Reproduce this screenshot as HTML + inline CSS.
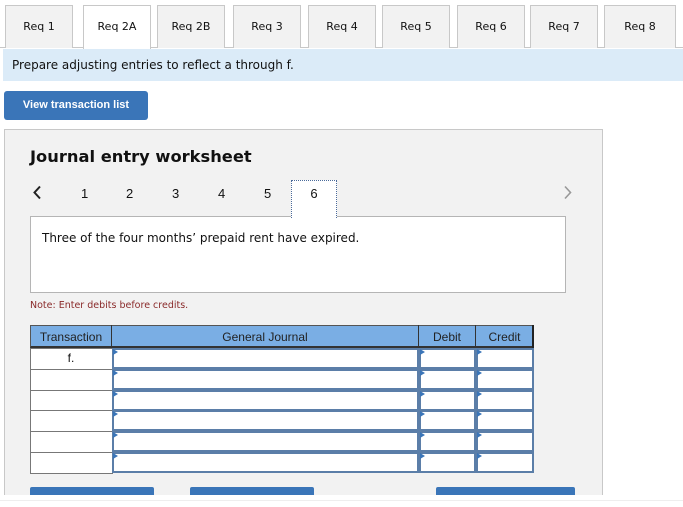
<!DOCTYPE html>
<html><head><style>
body{margin:0;width:683px;height:507px;background:#fff;font-family:"DejaVu Sans","Liberation Sans",sans-serif;position:relative;overflow:hidden;color:#111}
.a{position:absolute}
.tab{position:absolute;top:5px;height:42px;width:66px;background:#f2f2f2;border:1px solid #c8c8c8;border-bottom:none;font-size:11px;text-align:center;line-height:42px}
.tab.on{background:#fff;height:43px}
.num{position:absolute;top:186px;font-size:13px;font-family:"Liberation Sans",sans-serif}
.c{position:absolute;background:#fff;border:1px solid #777}
.in{position:absolute;background:#fff;border:2px solid #5b7ea8;box-sizing:border-box}
.tri{position:absolute;width:0;height:0;border-left:5px solid #3a75b8;border-top:3px solid transparent;border-bottom:3px solid transparent}
.btn{position:absolute;top:487px;height:8px;background:#3a75b8;border-radius:2px 2px 0 0}
</style></head><body>
<div class="a" style="left:0;top:47px;width:683px;height:1px;background:#c8c8c8"></div>
<div class="tab" style="left:5px">Req 1</div>
<div class="tab on" style="left:83px">Req 2A</div>
<div class="tab" style="left:157px">Req 2B</div>
<div class="tab" style="left:233px">Req 3</div>
<div class="tab" style="left:308px">Req 4</div>
<div class="tab" style="left:382px">Req 5</div>
<div class="tab" style="left:457px">Req 6</div>
<div class="tab" style="left:530px">Req 7</div>
<div class="tab" style="left:604px;width:70px">Req 8</div>
<div class="a" style="left:3px;top:49px;width:680px;height:32px;background:#dbebf8;font-size:12px;line-height:32px;text-indent:9px">Prepare adjusting entries to reflect a through f.</div>
<div class="a" style="left:4px;top:91px;width:144px;height:29px;background:#3a75b8;border-radius:3px;color:#fff;font:bold 11px 'Liberation Sans',sans-serif;text-align:center;line-height:29px">View transaction list</div>
<div class="a" style="left:4px;top:129px;width:597px;height:370px;background:#f2f2f2;border:1px solid #c8c8c8;border-bottom:none"></div>
<div class="a" style="left:0;top:495px;width:683px;height:12px;background:#fff"></div>
<div class="a" style="left:0;top:500px;width:683px;height:1px;background:#eee"></div>
<div class="a" style="left:30px;top:147px;font-size:16.3px;font-weight:bold">Journal entry worksheet</div>
<svg class="a" style="left:32px;top:185px" width="10" height="15"><path d="M8 1.5 L2.5 7.5 L8 13.5" fill="none" stroke="#222" stroke-width="2"/></svg>
<svg class="a" style="left:563px;top:185px" width="10" height="15"><path d="M2 1.5 L7.5 7.5 L2 13.5" fill="none" stroke="#999" stroke-width="1.6"/></svg>
<div class="num" style="left:81px">1</div><div class="num" style="left:126px">2</div><div class="num" style="left:172px">3</div><div class="num" style="left:218px">4</div><div class="num" style="left:264px">5</div>
<div class="a" style="left:30px;top:216px;width:534px;height:75px;background:#fff;border:1px solid #b5b5b5"></div>
<div class="a" style="left:291px;top:180px;width:44px;height:37px;background:#fff;border:1px dotted #4a6a9a;border-bottom:none;font:13px 'Liberation Sans',sans-serif;text-align:center;line-height:26px">6</div>
<div class="a" style="left:42px;top:231px;font-size:12px">Three of the four months’ prepaid rent have expired.</div>
<div class="a" style="left:30px;top:300px;font-size:9.5px;color:#8a2a2a">Note: Enter debits before credits.</div>
<div class="a" style="left:30px;top:325px;width:503px;height:23px;background:#7aaee4;border:1px solid #555;border-bottom:2px solid #333;box-sizing:border-box"></div>
<div class="a" style="left:111px;top:325px;width:1px;height:23px;background:#333"></div>
<div class="a" style="left:418px;top:325px;width:1px;height:23px;background:#333"></div>
<div class="a" style="left:475px;top:325px;width:1px;height:23px;background:#333"></div>
<div class="a" style="left:532px;top:325px;width:2px;height:23px;background:#222"></div>
<div class="a" style="left:30px;top:330px;width:82px;text-align:center;font:12px 'Liberation Sans',sans-serif;color:#222">Transaction</div>
<div class="a" style="left:112px;top:330px;width:306px;text-align:center;font:12px 'Liberation Sans',sans-serif;color:#222">General Journal</div>
<div class="a" style="left:419px;top:330px;width:56px;text-align:center;font:12px 'Liberation Sans',sans-serif;color:#222">Debit</div>
<div class="a" style="left:476px;top:330px;width:57px;text-align:center;font:12px 'Liberation Sans',sans-serif;color:#222">Credit</div>
<div id="rows"></div>
<script>
var h='';for(var i=0;i<6;i++){var y=348+i*20.8;
h+='<div class="c" style="left:30px;top:'+y+'px;width:81px;height:20px"></div>';
h+='<div class="in" style="left:112px;top:'+y+'px;width:307px;height:21px"></div>';
h+='<div class="in" style="left:419px;top:'+y+'px;width:57px;height:21px"></div>';
h+='<div class="in" style="left:476px;top:'+y+'px;width:58px;height:21px"></div>';
h+='<div class="tri" style="left:113px;top:'+(y+1)+'px"></div><div class="tri" style="left:420px;top:'+(y+1)+'px"></div><div class="tri" style="left:477px;top:'+(y+1)+'px"></div>';}
document.getElementById('rows').innerHTML=h;
</script>
<div class="a" style="left:30px;top:351px;width:82px;text-align:center;font:12px 'Liberation Sans',sans-serif">f.</div>
<div class="btn" style="left:30px;width:124px"></div>
<div class="btn" style="left:190px;width:124px"></div>
<div class="btn" style="left:436px;width:139px"></div>
</body></html>
